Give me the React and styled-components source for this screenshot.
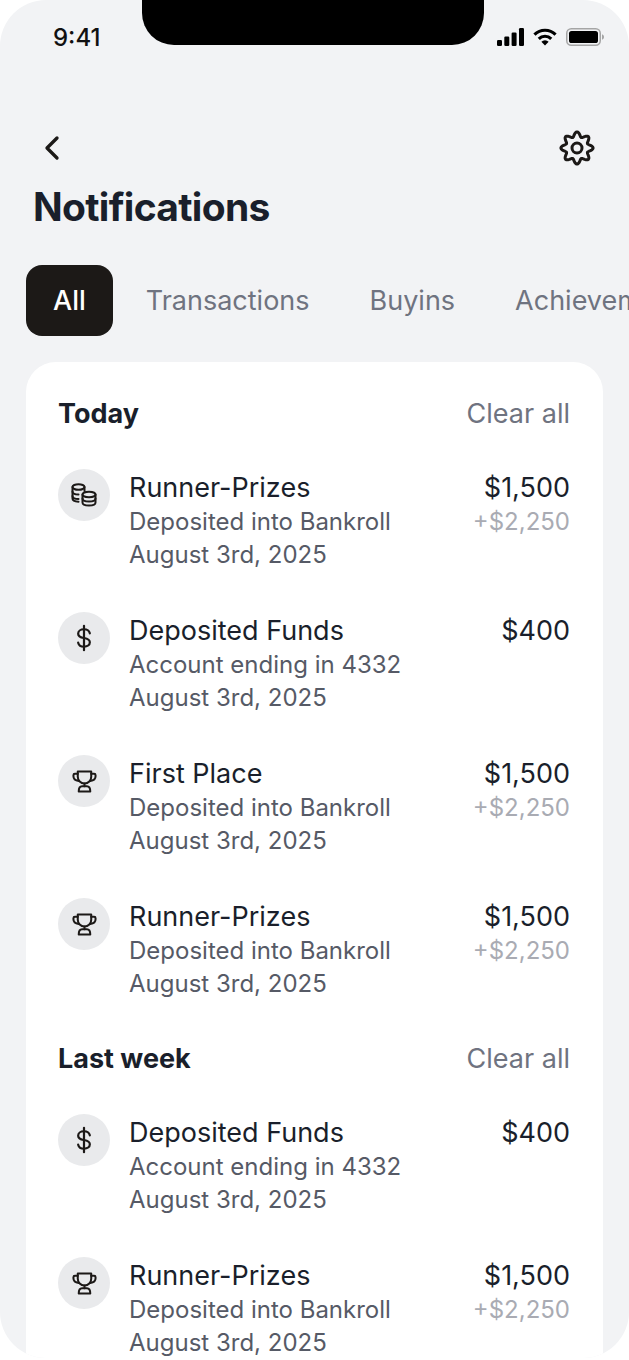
import React from 'react';
import styled, { createGlobalStyle } from 'styled-components';
import { ChevronLeft } from 'lucide-react';

const GlobalStyle = createGlobalStyle`
  html, body {
    margin: 0;
    padding: 0;
    background: #fff;
    font-family: Inter, "Noto Sans", sans-serif;
  }
`;

const Screen = styled.div`
  position: relative;
  width: 629px;
  height: 1358px;
  overflow: hidden;
  background: #f2f3f5;
  border-radius: 46px;
`;

const Notch = styled.div`
  position: absolute;
  top: 0;
  left: 142px;
  width: 342px;
  height: 45px;
  background: #000;
  border-radius: 0 0 32px 32px;
`;

const StatusBar = styled.div`
  display: flex;
  align-items: center;
  justify-content: space-between;
  height: 74px;
  padding: 0 25px 0 53px;
`;

const Clock = styled.span`
  font-size: 24px;
  font-weight: 500;
  color: #111;
`;

const StatusIcons = styled.div`
  display: flex;
  align-items: center;
  gap: 9px;
`;

const NavRow = styled.div`
  display: flex;
  align-items: center;
  justify-content: space-between;
  height: 40px;
  margin-top: 54px;
  padding: 0 34px 0 32px;
  color: #1c1917;
`;

const Title = styled.h1`
  margin: 16px 0 0;
  padding-left: 33px;
  font-size: 39px;
  line-height: 46px;
  font-weight: 700;
  letter-spacing: -0.7px;
  color: #1a1f2b;
`;

const Tabs = styled.div`
  display: flex;
  gap: 6px;
  margin-top: 35px;
  padding-left: 26px;
  white-space: nowrap;
`;

const Tab = styled.div`
  display: flex;
  align-items: center;
  flex-shrink: 0;
  height: 71px;
  padding: 0 27px;
  border-radius: 16px;
  font-size: 27px;
  font-weight: ${(p) => (p.$active ? 500 : 400)};
  color: ${(p) => (p.$active ? '#fff' : '#6f7380')};
  background: ${(p) => (p.$active ? '#1c1917' : 'transparent')};
`;

const Card = styled.div`
  margin: 26px 26px 0;
  padding: 33px 33px 0 32px;
  background: #fff;
  border-radius: 30px;
`;

const SectionHead = styled.div`
  display: flex;
  align-items: center;
  justify-content: space-between;
  height: 36px;
  margin-top: ${(p) => (p.$later ? '-1px' : '0')};
  margin-bottom: 38px;
`;

const SectionTitle = styled.span`
  font-size: 27px;
  font-weight: 700;
  color: #1a1f2b;
`;

const ClearAll = styled.span`
  font-size: 27px;
  color: #6f7380;
`;

const Row = styled.div`
  display: flex;
  height: 143px;
`;

const IconCircle = styled.div`
  display: flex;
  align-items: center;
  justify-content: center;
  flex-shrink: 0;
  width: 52px;
  height: 52px;
  margin-right: 19px;
  border-radius: 50%;
  background: #e9eaec;
  color: #1c1917;
`;

const RowBody = styled.div`
  flex: 1;
  padding-top: 1px;
`;

const RowLine = styled.div`
  display: flex;
  justify-content: space-between;
`;

const Name = styled.span`
  font-size: 27px;
  line-height: 35px;
  color: #1a1f2b;
`;

const Sub = styled.div`
  font-size: 24px;
  line-height: 33px;
  color: #565a66;
`;

const Bonus = styled.span`
  font-size: 24px;
  line-height: 33px;
  color: #a9abb3;
`;

const Signal = () => (
  <svg width="27" height="18" viewBox="0 0 27 18" fill="#000">
    <rect x="0" y="12" width="5" height="6" rx="1.2" />
    <rect x="7.300" y="8.500" width="5" height="9.500" rx="1.2" />
    <rect x="14.600" y="4.500" width="5" height="13.500" rx="1.2" />
    <rect x="22" y="0" width="5" height="18" rx="1.2" />
  </svg>
);

const Wifi = () => (
  <svg width="24" height="18" viewBox="0 0 25 18" fill="none" stroke="#000" strokeWidth="3.2">
    <path d="M1.500 6.500a15.500 15.500 0 0 1 22 0" />
    <path d="M6 11a9.200 9.200 0 0 1 13 0" />
    <path d="M12.500 17.800l-3.800-3.800a5.400 5.400 0 0 1 7.600 0z" fill="#000" stroke="none" />
  </svg>
);

const Battery = () => (
  <svg width="38" height="18" viewBox="0 0 38 18">
    <rect x="0.750" y="0.750" width="33.500" height="16.500" rx="4.500" fill="none" stroke="#a5a5a5" strokeWidth="1.500" />
    <rect x="3" y="3" width="29" height="12" rx="2.600" fill="#000" />
    <path d="M36 6.200v5.600c1.200-.4 2-1.500 2-2.800s-.8-2.400-2-2.800z" fill="#a5a5a5" />
  </svg>
);

// wavy eight-lobed outline of the settings gear
const gearOutline = Array.from({ length: 96 }, (_, i) => {
  const angle = (i / 96) * Math.PI * 2;
  const r = 13.7 + 2.4 * Math.cos(8 * angle);
  const x = 18 + r * Math.sin(angle);
  const y = 18 - r * Math.cos(angle);
  return `${i === 0 ? 'M' : 'L'}${x.toFixed(2)} ${y.toFixed(2)}`;
}).join(' ') + ' Z';

const Gear = () => (
  <svg width="36" height="36" viewBox="0 0 36 36" fill="none" stroke="currentColor" strokeWidth="3" strokeLinejoin="round">
    <path d={gearOutline} />
    <circle cx="18" cy="18" r="5" />
  </svg>
);

const Coins = () => (
  <svg width="26" height="26" viewBox="0 0 26 26" fill="none" stroke="currentColor" strokeWidth="2" strokeLinecap="round" strokeLinejoin="round">
    <ellipse cx="7.500" cy="5" rx="6" ry="2.800" />
    <path d="M1.500 5v11.500c0 1.800 2.200 3 6 3.200" />
    <path d="M1.500 9.500c0 1.700 2.500 3 6 3" />
    <path d="M1.500 14c0 1.700 2.500 3 6 3" />
    <path d="M13.500 5v4" />
    <ellipse cx="18" cy="12.500" rx="6.500" ry="2.800" />
    <path d="M11.500 12.500v8c0 1.700 2.900 3 6.500 3s6.500-1.300 6.500-3v-8" />
    <path d="M11.500 16.500c0 1.700 2.900 3 6.500 3s6.500-1.300 6.500-3" />
  </svg>
);

const Dollar = () => (
  <svg width="28" height="28" viewBox="0 0 24 24" fill="none" stroke="currentColor" strokeWidth="1.900" strokeLinecap="round" strokeLinejoin="round">
    <path d="M17 8c-.5-2-2.500-3.500-5-3.500-3 0-5 1.600-5 3.800 0 2.200 2 3.200 5 3.700s5 1.500 5 3.700c0 2.200-2 3.800-5 3.800-2.500 0-4.500-1.500-5-3.500" />
    <path d="M12 1.500v21" />
  </svg>
);

const Trophy = () => (
  <svg width="25" height="25" viewBox="0 0 26 26" fill="none" stroke="currentColor" strokeWidth="2.100" strokeLinecap="round" strokeLinejoin="round">
    <path d="M6 2.500h14v5.500c0 4-3 7-7 7s-7-3-7-7z" />
    <path d="M6 5H3a1.500 1.500 0 0 0-1.500 1.500v1c0 2.500 2 4.500 5.500 5" />
    <path d="M20 5h3a1.500 1.500 0 0 1 1.500 1.500v1c0 2.500-2 4.500-5.500 5" />
    <path d="M13 15v3" />
    <path d="M10.500 18h5c2 0 3.500 1.800 3.500 5.500h-12c0-3.700 1.500-5.500 3.500-5.500z" />
  </svg>
);

const icons = {
  coins: <Coins />,
  dollar: <Dollar />,
  trophy: <Trophy />,
};

const today = [
  { icon: 'coins', name: 'Runner-Prizes', sub: 'Deposited into Bankroll', amount: '$1,500', bonus: '+$2,250' },
  { icon: 'dollar', name: 'Deposited Funds', sub: 'Account ending in 4332', amount: '$400' },
  { icon: 'trophy', name: 'First Place', sub: 'Deposited into Bankroll', amount: '$1,500', bonus: '+$2,250' },
  { icon: 'trophy', name: 'Runner-Prizes', sub: 'Deposited into Bankroll', amount: '$1,500', bonus: '+$2,250' },
];

const lastWeek = [
  { icon: 'dollar', name: 'Deposited Funds', sub: 'Account ending in 4332', amount: '$400' },
  { icon: 'trophy', name: 'Runner-Prizes', sub: 'Deposited into Bankroll', amount: '$1,500', bonus: '+$2,250' },
];

const NotificationRow = ({ item }) => (
  <Row>
    <IconCircle>{icons[item.icon]}</IconCircle>
    <RowBody>
      <RowLine>
        <Name>{item.name}</Name>
        <Name>{item.amount}</Name>
      </RowLine>
      <RowLine>
        <Sub>{item.sub}</Sub>
        {item.bonus && <Bonus>{item.bonus}</Bonus>}
      </RowLine>
      <Sub>August 3rd, 2025</Sub>
    </RowBody>
  </Row>
);

const App = () => (
  <>
    <GlobalStyle />
    <Screen>
      <Notch />
      <StatusBar>
        <Clock>9:41</Clock>
        <StatusIcons>
          <Signal />
          <Wifi />
          <Battery />
        </StatusIcons>
      </StatusBar>
      <NavRow>
        <ChevronLeft size={40} strokeWidth={2} />
        <Gear />
      </NavRow>
      <Title>Notifications</Title>
      <Tabs>
        <Tab $active>All</Tab>
        <Tab>Transactions</Tab>
        <Tab>Buyins</Tab>
        <Tab>Achievements</Tab>
      </Tabs>
      <Card>
        <SectionHead>
          <SectionTitle>Today</SectionTitle>
          <ClearAll>Clear all</ClearAll>
        </SectionHead>
        {today.map((item, i) => (
          <NotificationRow key={i} item={item} />
        ))}
        <SectionHead $later>
          <SectionTitle>Last week</SectionTitle>
          <ClearAll>Clear all</ClearAll>
        </SectionHead>
        {lastWeek.map((item, i) => (
          <NotificationRow key={i} item={item} />
        ))}
      </Card>
    </Screen>
  </>
);

export default App;
